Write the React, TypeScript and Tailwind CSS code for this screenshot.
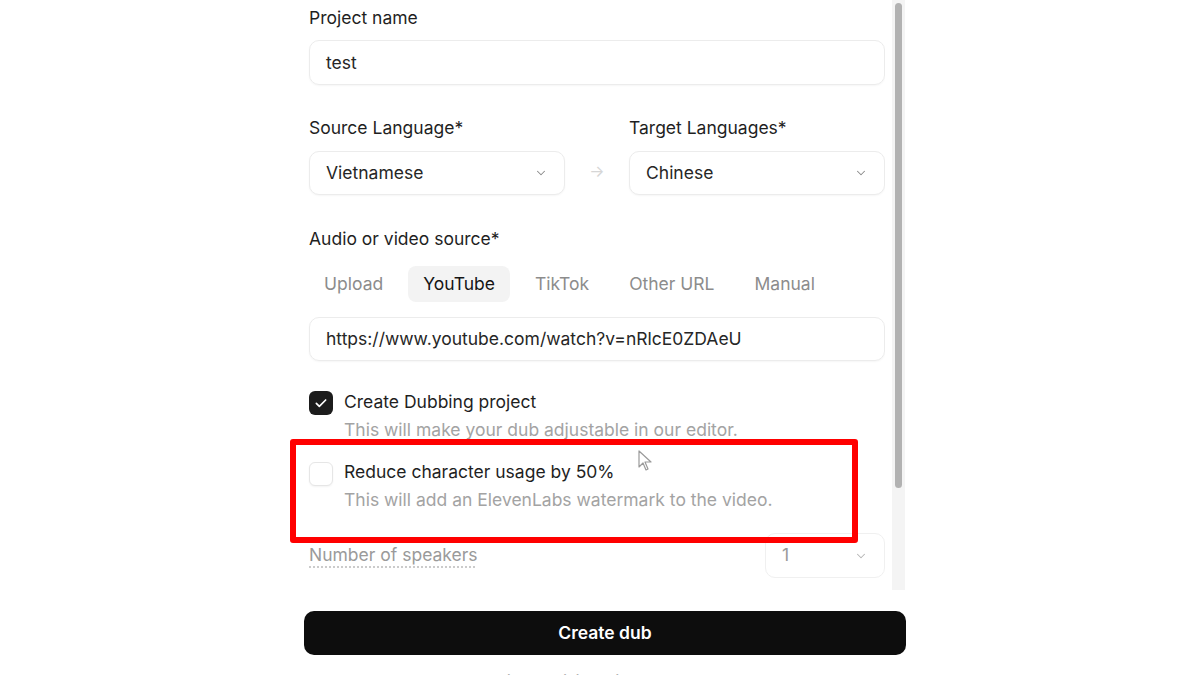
import React from 'react';

function Chevron() {
  return (
    <svg className="w-[14px] h-[14px] text-[#8a8a8a]" viewBox="0 0 24 24" fill="none" stroke="currentColor" strokeWidth={1.8} strokeLinecap="round" strokeLinejoin="round">
      <path d="M6 9l6 6 6-6" />
    </svg>
  );
}

function Select({ value }: { value: string }) {
  return (
    <div className="h-[44px] flex items-center justify-between pl-[16px] pr-[16px] rounded-[10px] border border-[#ececec] shadow-[0_1px_2px_rgba(0,0,0,0.04)] bg-white">
      <span className="text-[17.5px] text-[#262626]">{value}</span>
      <Chevron />
    </div>
  );
}

const tabs = ['Upload', 'YouTube', 'TikTok', 'Other URL', 'Manual'];

export default function App() {
  return (
    <div className="relative w-[1200px] h-[675px] bg-white overflow-hidden" style={{ fontFamily: 'Inter, "Liberation Sans", sans-serif' }}>
      <div className="ml-[304px] w-[602px]">
        <div className="flex h-[590px]">
          <div className="w-[581px] pl-[5px] pt-[6px] overflow-hidden">
            <div className="text-[17.5px] leading-[24px] text-[#1f1f1f]">Project name</div>
            <div className="mt-[10px] h-[45px] flex items-center px-[16px] rounded-[10px] border border-[#ececec] shadow-[0_1px_2px_rgba(0,0,0,0.04)]">
              <span className="text-[17.5px] text-[#262626] mt-[2px]">test</span>
            </div>

            <div className="mt-[31px] flex">
              <div className="w-[256px]">
                <div className="text-[17.5px] leading-[24px] text-[#1f1f1f]">Source Language*</div>
                <div className="mt-[11px]">
                  <Select value="Vietnamese" />
                </div>
              </div>
              <div className="w-[64px] flex items-end justify-center pb-[12px]">
                <span className="text-[16px] text-[#d6d6d6]">→</span>
              </div>
              <div className="w-[256px]">
                <div className="text-[17.5px] leading-[24px] text-[#1f1f1f]">Target Languages*</div>
                <div className="mt-[11px]">
                  <Select value="Chinese" />
                </div>
              </div>
            </div>

            <div className="mt-[32px] text-[17.5px] leading-[24px] text-[#1f1f1f]">Audio or video source*</div>
            <div className="mt-[15px] flex items-center gap-[10px]">
              {tabs.map((t) => (
                <div
                  key={t}
                  className={`h-[36px] px-[15px] flex items-center rounded-[8px] text-[17.5px] ${t === 'YouTube' ? 'bg-[#f3f3f3] text-[#151515]' : 'text-[#8c8c8c]'}`}
                >
                  {t}
                </div>
              ))}
            </div>
            <div className="mt-[15px] h-[44px] flex items-center px-[16px] rounded-[10px] border border-[#ececec] shadow-[0_1px_2px_rgba(0,0,0,0.04)]">
              <span className="text-[17.5px] text-[#262626]">https://www.youtube.com/watch?v=nRlcE0ZDAeU</span>
            </div>

            <div className="mt-[29px] flex gap-[11px]">
              <div className="mt-[1px] w-[24px] h-[24px] rounded-[6px] bg-[#1c1c1c] flex items-center justify-center shrink-0">
                <svg className="w-[16px] h-[16px] text-white" viewBox="0 0 24 24" fill="none" stroke="currentColor" strokeWidth={2.5} strokeLinecap="round" strokeLinejoin="round">
                  <path d="M5 12.5l4.5 4.5L19 7.5" />
                </svg>
              </div>
              <div>
                <div className="text-[17.5px] leading-[24px] text-[#1f1f1f]">Create Dubbing project</div>
                <div className="mt-[4px] text-[17.5px] leading-[24px] text-[#a3a3a3]">This will make your dub adjustable in our editor.</div>
              </div>
            </div>

            <div className="mt-[18px] flex gap-[11px]">
              <div className="mt-[2px] w-[24px] h-[24px] rounded-[6px] border border-[#e6e6e6] bg-white shadow-[0_1px_2px_rgba(0,0,0,0.05)] shrink-0" />
              <div>
                <div className="text-[17.5px] leading-[24px] text-[#1f1f1f]">Reduce character usage by 50%</div>
                <div className="mt-[4px] text-[17.5px] leading-[24px] text-[#a3a3a3]">This will add an ElevenLabs watermark to the video.</div>
              </div>
            </div>

            <div className="mt-[21px] flex items-center justify-between">
              <span className="text-[17.5px] text-[#9a9a9a] underline decoration-dotted decoration-[#c4c4c4] underline-offset-[5px]">Number of speakers</span>
              <div className="w-[120px] h-[45px] flex items-center justify-between px-[16px] rounded-[10px] border border-[#f0f0f0]">
                <span className="text-[17.5px] text-[#9a9a9a]">1</span>
                <svg className="w-[14px] h-[14px] text-[#b5b5b5]" viewBox="0 0 24 24" fill="none" stroke="currentColor" strokeWidth={1.8} strokeLinecap="round" strokeLinejoin="round">
                  <path d="M6 9l6 6 6-6" />
                </svg>
              </div>
            </div>
          </div>
          <div className="ml-[7px] w-[13px] bg-[#f4f4f4] pt-[3px] px-[3px]">
            <div className="h-[485px] rounded-full bg-[#b2b2b2]" />
          </div>
        </div>

        <button className="mt-[21px] w-[602px] h-[44px] rounded-[10px] bg-[#0d0d0d] text-white text-[17.5px] font-semibold flex items-center justify-center">
          Create dub
        </button>
        <div className="mt-[15px] text-center text-[15px] text-[#b0b0b0]">Credits remaining this month: 100,100</div>
      </div>

      <div className="absolute left-[290px] top-[439px] w-[568px] h-[104px] border-[6px] border-[#ff0000] rounded-[3px]" />

      <svg className="absolute left-[637px] top-[450px] w-[16px] h-[22px]" viewBox="0 0 16 22" fill="none">
        <path d="M2 1v16l4-4 3 7 2-1-3-7h6z" fill="#ffffff" stroke="#9a9a9a" strokeWidth={1.2} strokeLinejoin="round" />
      </svg>
    </div>
  );
}
